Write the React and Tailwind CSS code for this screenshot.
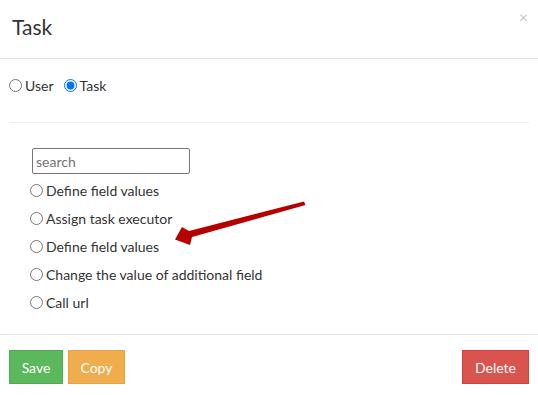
import { useState } from 'react';

const actions = [
  'Define field values',
  'Assign task executor',
  'Define field values',
  'Change the value of additional field',
  'Call url',
];

const App = () => {
  const [target, setTarget] = useState('task');
  const [action, setAction] = useState(null);

  return (
    <div
      className="relative w-[538px] h-[395px] bg-white text-[#333] overflow-hidden"
      style={{ fontFamily: 'Lato, "Open Sans", sans-serif' }}
    >
      {/* Header */}
      <div className="relative h-[59px] border-b border-[#e5e5e5] px-[12px] flex items-center">
        <h4 className="text-[21px] leading-none text-[#333] -mt-[6px]">Task</h4>
        <button className="absolute right-[10px] top-[9px] text-[16px] text-[#c8c8c8] leading-none">×</button>
      </div>

      {/* Body */}
      <div className="px-[9px] pt-[16px]">
        <div className="flex items-center h-[20px] text-[14px]">
          <label className="flex items-center gap-[3px] mr-[10px]">
            <input
              type="radio"
              name="target"
              className="m-0 w-[13px] h-[13px]"
              checked={target === 'user'}
              onChange={() => setTarget('user')}
            />
            User
          </label>
          <label className="flex items-center gap-[3px]">
            <input
              type="radio"
              name="target"
              className="m-0 w-[13px] h-[13px]"
              checked={target === 'task'}
              onChange={() => setTarget('task')}
            />
            Task
          </label>
        </div>

        <hr className="mt-[27px] border-t border-[#eeeeee]" />

        <div className="pl-[21px] pt-[25px]">
          <input
            type="text"
            placeholder="search"
            className="ml-[2px] w-[158px] h-[26px] border border-[#767676] rounded-[2px] px-[3px] text-[14px] placeholder:text-[#757575] outline-none"
          />
          <div className="mt-[6px] flex flex-col gap-[8px]">
            {actions.map((label, i) => (
              <label key={i} className="flex items-center gap-[3px] h-[20px] text-[14px]">
                <input
                  type="radio"
                  name="action"
                  className="m-0 w-[13px] h-[13px]"
                  checked={action === i}
                  onChange={() => setAction(i)}
                />
                {label}
              </label>
            ))}
          </div>
        </div>
      </div>

      {/* Footer */}
      <div className="mt-[22px] border-t border-[#e5e5e5] px-[9px] pt-[15px] flex items-center">
        <button className="h-[34px] w-[54px] bg-[#5cb85c] border border-[#4cae4c] text-white text-[14px]">
          Save
        </button>
        <button className="ml-[5px] h-[34px] w-[57px] bg-[#f0ad4e] border border-[#eea236] text-white text-[14px]">
          Copy
        </button>
        <button className="ml-auto h-[34px] w-[67px] bg-[#d9534f] border border-[#d43f3a] text-white text-[14px]">
          Delete
        </button>
      </div>

      {/* Annotation arrow */}
      <svg className="absolute left-0 top-0 pointer-events-none" width="538" height="395">
        <path d="M304 201.5 L305.5 205 L192 237 L190 245 L175 239.5 L182 227 L189 231 Z" fill="#b50000" />
      </svg>
    </div>
  );
};

export default App;
